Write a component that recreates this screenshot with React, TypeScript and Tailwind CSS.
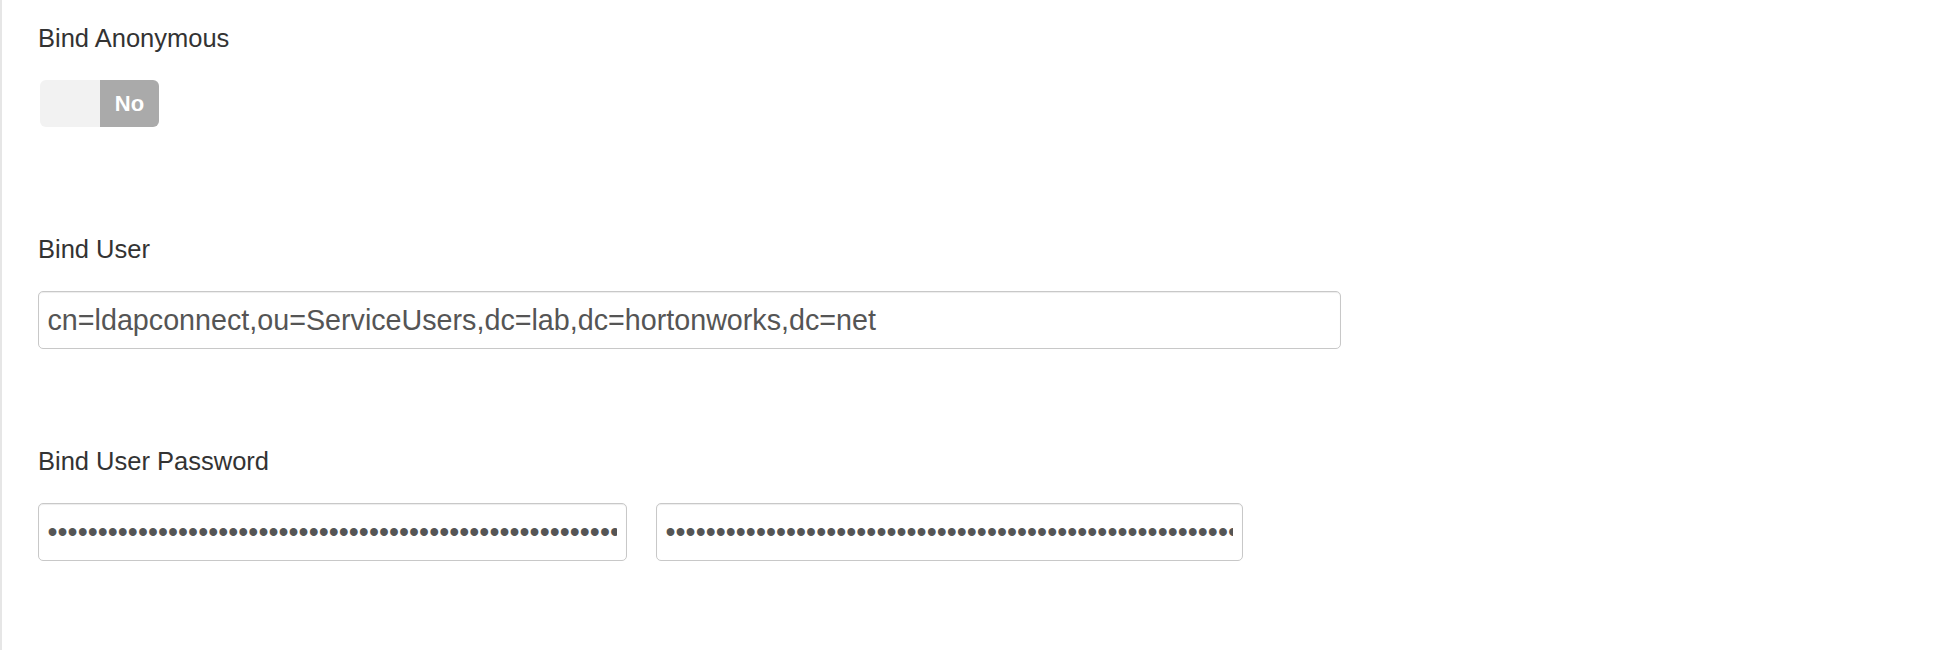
import React from 'react';

const FONT = { fontFamily: '"Liberation Sans", Arial, Helvetica, sans-serif' };

const PASSWORD = 'x'.repeat(120);

function FieldLabel({ children }: { children: React.ReactNode }) {
  return <div className="text-[25.5px] leading-[36px] text-[#333333]">{children}</div>;
}

function TextInput({ value, type = 'text', className = '' }: { value: string; type?: string; className?: string }) {
  return (
    <input
      type={type}
      value={value}
      readOnly
      className={`h-[58px] rounded-[5px] border-[1.5px] border-[#c8c8c8] bg-white pl-[8.5px] pr-[9px] text-[28.7px] text-[#555555] shadow-[inset_0_1px_1px_rgba(0,0,0,0.075)] outline-none ${className}`}
      style={FONT}
    />
  );
}

function Toggle() {
  return (
    <div className="ml-[2px] flex h-[47px] w-[119px] overflow-hidden rounded-[6px]">
      <div className="w-[60px] bg-[#f2f2f2]" />
      <div className="flex flex-1 items-center justify-center bg-[#aaaaaa] text-[22px] font-bold text-white">
        No
      </div>
    </div>
  );
}

export default function App() {
  return (
    <div className="min-h-[650px] w-full border-l-[2px] border-[#e6e6e6] bg-white pl-[36px] pt-[20px]" style={FONT}>
      <div className="h-[211px]">
        <FieldLabel>Bind Anonymous</FieldLabel>
        <div className="mt-[24px]">
          <Toggle />
        </div>
      </div>

      <div className="h-[212px]">
        <FieldLabel>Bind User</FieldLabel>
        <div className="mt-[24px]">
          <TextInput value="cn=ldapconnect,ou=ServiceUsers,dc=lab,dc=hortonworks,dc=net" className="w-[1303px]" />
        </div>
      </div>

      <div>
        <FieldLabel>Bind User Password</FieldLabel>
        <div className="mt-[24px] flex gap-[29px]">
          <TextInput type="password" value={PASSWORD} className="w-[589px]" />
          <TextInput type="password" value={PASSWORD} className="w-[587px]" />
        </div>
      </div>
    </div>
  );
}
